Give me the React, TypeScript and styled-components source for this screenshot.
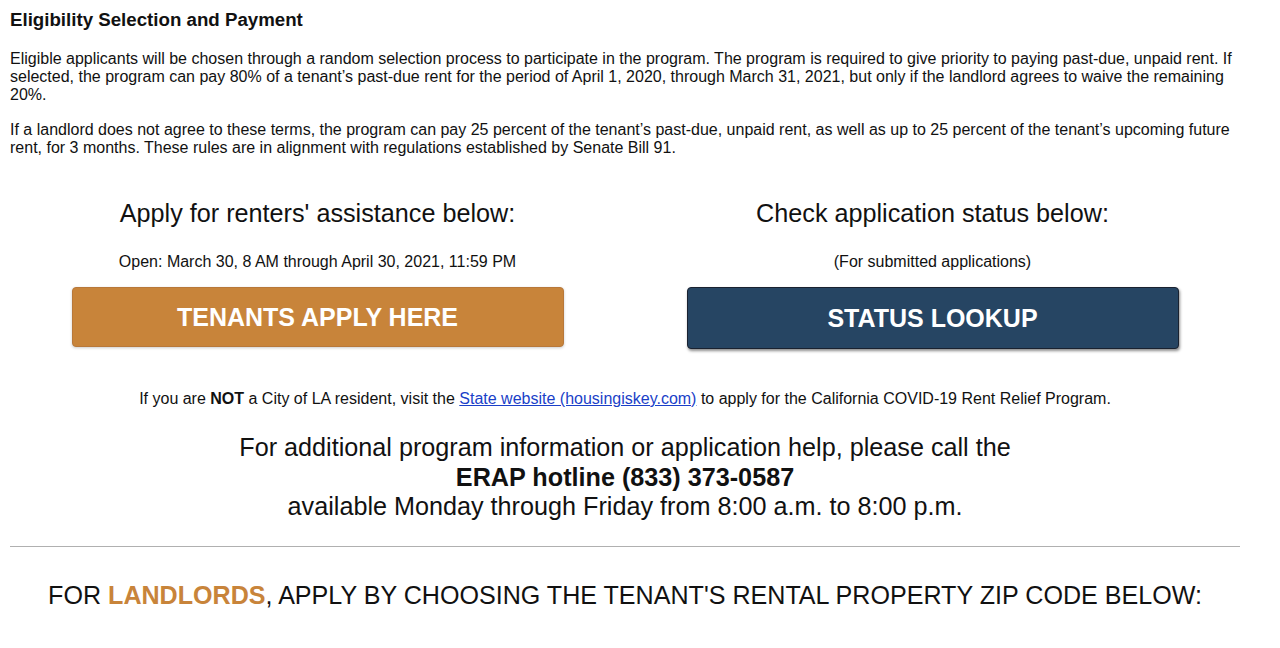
import styled, { createGlobalStyle } from 'styled-components';

const GlobalStyle = createGlobalStyle`
  html, body {
    margin: 0;
    padding: 0;
    background: #ffffff;
  }
  body {
    font-family: "Liberation Sans", Arial, Helvetica, sans-serif;
    color: #111111;
  }
`;

const App = () => {
  return (
    <>
      <GlobalStyle />
      <Page>
        <SectionTitle>Eligibility Selection and Payment</SectionTitle>
        <Para>
          Eligible applicants will be chosen through a random selection process to participate in the program. The program is required to give priority to paying past-due, unpaid rent. If selected, the program can pay 80% of a tenant’s past-due rent for the period of April 1, 2020, through March 31, 2021, but only if the landlord agrees to waive the remaining 20%.
        </Para>
        <Para>
          If a landlord does not agree to these terms, the program can pay 25 percent of the tenant’s past-due, unpaid rent, as well as up to 25 percent of the tenant’s upcoming future rent, for 3 months. These rules are in alignment with regulations established by Senate Bill 91.
        </Para>

        <Columns>
          <Column>
            <ColumnHeading>Apply for renters' assistance below:</ColumnHeading>
            <ColumnNote>Open: March 30, 8 AM through April 30, 2021, 11:59 PM</ColumnNote>
            <ActionButton $variant="orange">TENANTS APPLY HERE</ActionButton>
          </Column>
          <Column>
            <ColumnHeading>Check application status below:</ColumnHeading>
            <ColumnNote>(For submitted applications)</ColumnNote>
            <ActionButton $variant="navy">STATUS LOOKUP</ActionButton>
          </Column>
        </Columns>

        <Notice>
          If you are <strong>NOT</strong> a City of LA resident, visit the{' '}
          <Link href="#">State website (housingiskey.com)</Link> to apply for the California COVID-19 Rent Relief Program.
        </Notice>

        <Hotline>
          For additional program information or application help, please call the
          <br />
          <strong>ERAP hotline (833) 373-0587</strong>
          <br />
          available Monday through Friday from 8:00 a.m. to 8:00 p.m.
        </Hotline>

        <Divider />

        <LandlordTitle>
          FOR <Accent>LANDLORDS</Accent>, APPLY BY CHOOSING THE TENANT'S RENTAL PROPERTY ZIP CODE BELOW:
        </LandlordTitle>
      </Page>
    </>
  );
};

export default App;

const Page = styled.div`
  width: 1230px;
  padding: 9px 10px 0;
`;

const SectionTitle = styled.h2`
  font-size: 18.7px;
  font-weight: 700;
  margin: 0 0 19px;
  line-height: 22px;
`;

const Para = styled.p`
  font-size: 16px;
  line-height: 18px;
  margin: 0 0 17px;
`;

const Columns = styled.div`
  display: grid;
  grid-template-columns: 1fr 1fr;
  margin-top: 41px;
`;

const Column = styled.div`
  display: flex;
  flex-direction: column;
  align-items: center;
`;

const ColumnHeading = styled.h3`
  font-size: 25.2px;
  font-weight: 400;
  line-height: 30px;
  margin: 0 0 25px;
`;

const ColumnNote = styled.p`
  font-size: 16px;
  line-height: 18px;
  margin: 0 0 16px;
`;

const ActionButton = styled.a<{ $variant: 'orange' | 'navy' }>`
  display: flex;
  align-items: center;
  justify-content: center;
  width: 492px;
  height: ${(p) => (p.$variant === 'orange' ? '60px' : '62px')};
  box-sizing: border-box;
  border-radius: 4px;
  font-size: 25px;
  font-weight: 700;
  color: #ffffff;
  text-decoration: none;
  background: ${(p) => (p.$variant === 'orange' ? '#c8843a' : '#264563')};
  border: 1px solid ${(p) => (p.$variant === 'orange' ? '#b8783a' : '#1a2230')};
  box-shadow: ${(p) =>
    p.$variant === 'orange'
      ? '0 1px 3px rgba(0, 0, 0, 0.2)'
      : '1px 2px 3px rgba(0, 0, 0, 0.45)'};
`;

const Notice = styled.p`
  font-size: 16px;
  line-height: 18px;
  text-align: center;
  margin: 41px 0 0;
`;

const Link = styled.a`
  color: #1a3fc8;
  text-decoration: underline;
`;

const Hotline = styled.p`
  font-size: 25.2px;
  line-height: 29.5px;
  text-align: center;
  margin: 25px 0 0;
`;

const Divider = styled.hr`
  border: none;
  border-top: 1px solid #b0b0b0;
  margin: 24px 0 0;
`;

const LandlordTitle = styled.h3`
  font-size: 25.1px;
  font-weight: 400;
  line-height: 30px;
  text-align: center;
  margin: 33px 0 0;
`;

const Accent = styled.span`
  color: #c8843a;
  font-weight: 700;
`;
